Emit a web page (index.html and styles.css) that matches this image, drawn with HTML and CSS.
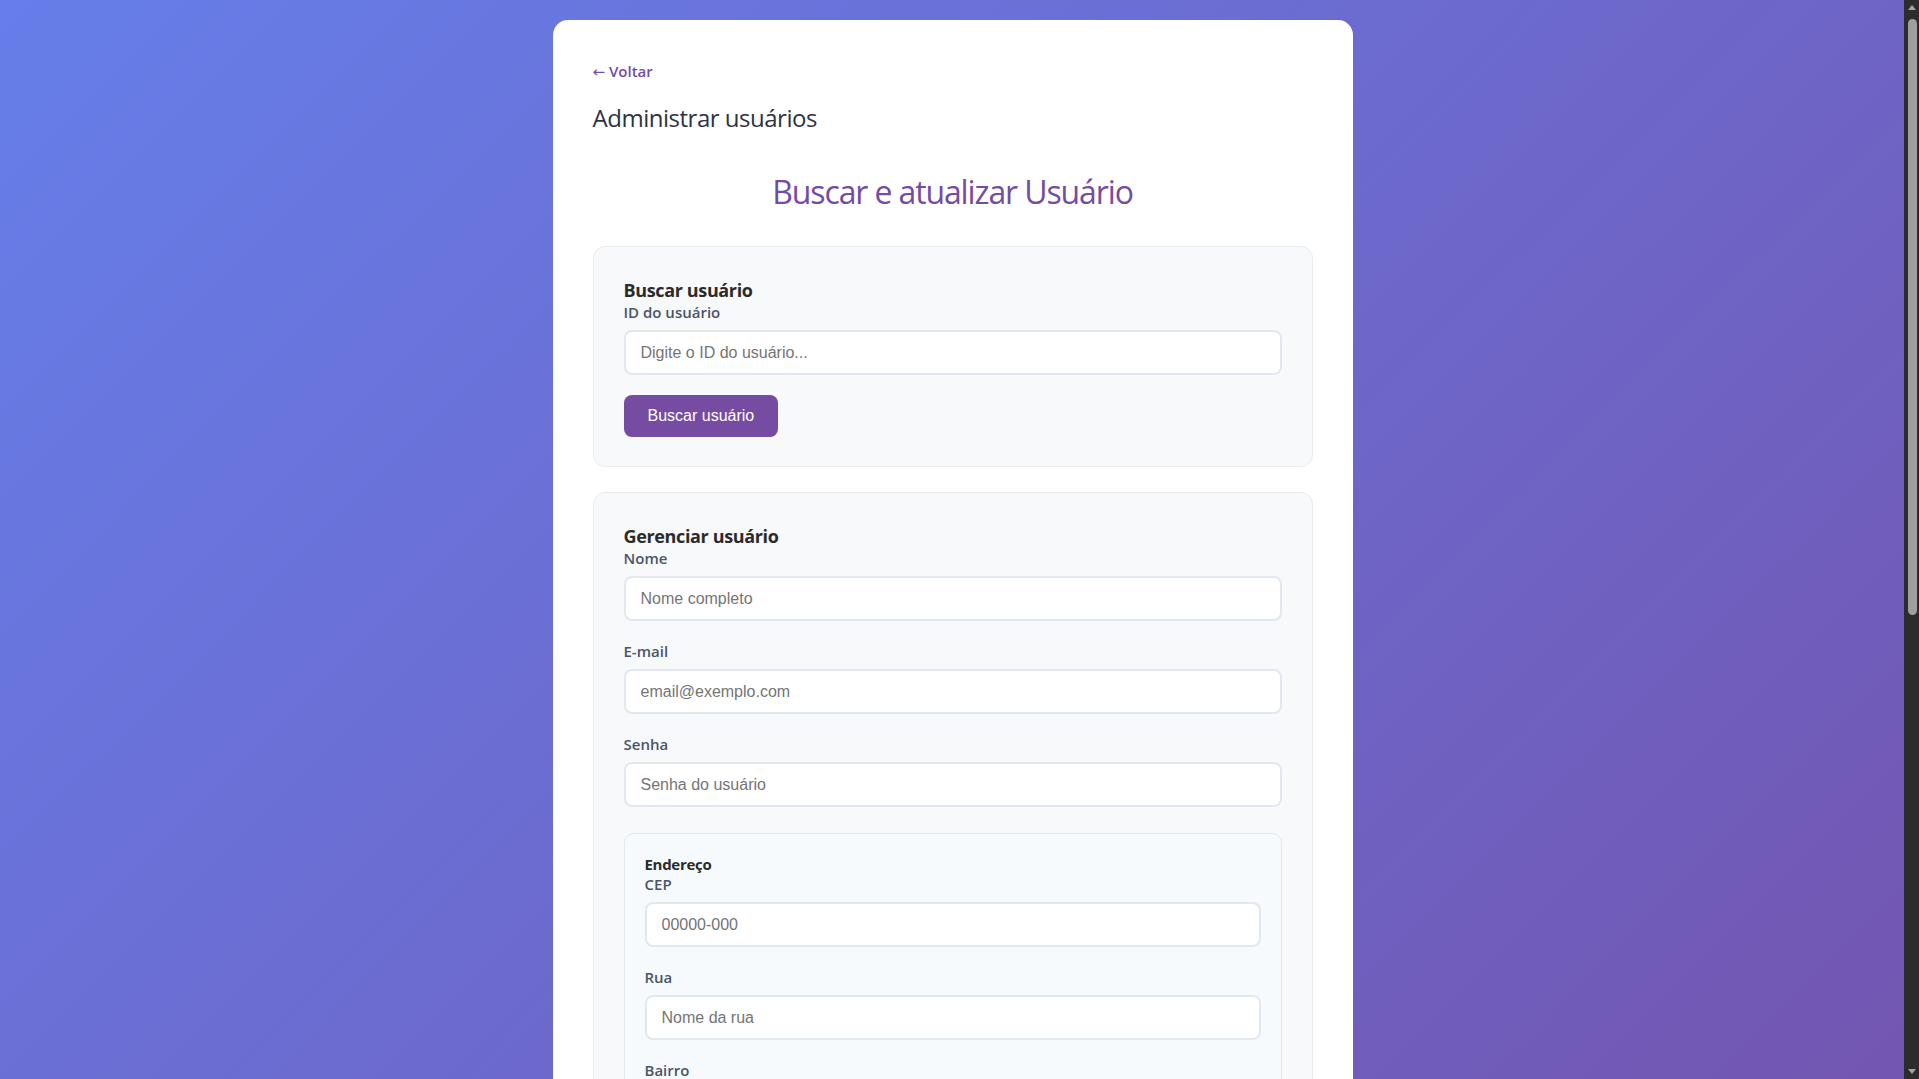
FILE: index.html
```html
<!DOCTYPE html>
<html lang="pt-BR">
<head>
<meta charset="utf-8">
<title>Administrar usuários</title>
<link rel="stylesheet" href="styles.css">
</head>
<body>
<main class="container">
  <div class="back-row"><a class="back" href="#"><span class="back-arrow">←</span> Voltar</a></div>
  <h2 class="page-title">Administrar usuários</h2>
  <h1 class="main-title">Buscar e atualizar Usuário</h1>

  <section class="panel">
    <h3 class="panel-title">Buscar usuário</h3>
    <div class="group">
      <label class="label">ID do usuário</label>
      <input class="input" type="text" placeholder="Digite o ID do usuário...">
    </div>
    <button class="btn">Buscar usuário</button>
  </section>

  <section class="panel">
    <h3 class="panel-title">Gerenciar usuário</h3>
    <div class="group">
      <label class="label">Nome</label>
      <input class="input" type="text" placeholder="Nome completo">
    </div>
    <div class="group">
      <label class="label">E-mail</label>
      <input class="input" type="email" placeholder="email@exemplo.com">
    </div>
    <div class="group">
      <label class="label">Senha</label>
      <input class="input" type="text" placeholder="Senha do usuário">
    </div>

    <div class="address">
      <h4 class="address-title">Endereço</h4>
      <div class="group">
        <label class="label">CEP</label>
        <input class="input" type="text" placeholder="00000-000">
      </div>
      <div class="group">
        <label class="label">Rua</label>
        <input class="input" type="text" placeholder="Nome da rua">
      </div>
      <div class="group">
        <label class="label">Bairro</label>
        <input class="input" type="text" placeholder="Nome do bairro">
      </div>
      <div class="group">
        <label class="label">Cidade</label>
        <input class="input" type="text" placeholder="Nome da cidade">
      </div>
      <div class="group">
        <label class="label">Estado</label>
        <input class="input" type="text" placeholder="UF">
      </div>
      <div class="group">
        <label class="label">Número</label>
        <input class="input" type="text" placeholder="Número">
      </div>
    </div>

    <div class="actions">
      <button class="btn">Atualizar usuário</button>
      <button class="btn btn-danger">Excluir usuário</button>
    </div>
  </section>

  <section class="panel">
    <h3 class="panel-title">Excluir usuário</h3>
    <div class="group">
      <label class="label">ID do usuário</label>
      <input class="input" type="text" placeholder="Digite o ID do usuário...">
    </div>
    <button class="btn btn-danger">Excluir usuário</button>
  </section>
</main>

<div class="fake-scrollbar" aria-hidden="true">
  <span class="sb-arrow sb-up"></span>
  <span class="sb-thumb"></span>
  <span class="sb-arrow sb-down"></span>
</div>
</body>
</html>
```

FILE: styles.css
```css
* {
  box-sizing: border-box;
}

body {
  margin: 0;
  padding: 20px 34px 20px 20px;
  min-height: 100vh;
  background: linear-gradient(135deg, #667eea 0%, #764ba2 100%);
  font-family: "Open Sans", "Noto Sans", sans-serif;
  color: #333;
}

.container {
  max-width: 800px;
  margin: 0 auto;
  background: #ffffff;
  border-radius: 15px;
  padding: 40px;
}

.back-row {
  height: 22px;
  line-height: 22px;
  font-size: 15px;
}

.back {
  color: #764ba2;
  font-weight: 600;
  text-decoration: none;
}

.back-arrow {
  font-family: "DejaVu Sans", sans-serif;
  font-size: 15px;
  font-weight: 400;
  line-height: 1;
}

.page-title {
  margin: 20px 0 0;
  font-size: 24px;
  line-height: 32px;
  font-weight: 400;
  color: #2d3340;
  letter-spacing: -0.02em;
}

.main-title {
  margin: 36px 0 33px;
  font-size: 32px;
  line-height: 43px;
  font-weight: 400;
  color: #764ba2;
  text-align: center;
  letter-spacing: -0.035em;
}

.panel {
  background: #f8f9fa;
  border: 1px solid #e9ecef;
  border-radius: 12px;
  padding: 30px 30px 29px;
  margin-bottom: 25px;
}

.panel-title {
  margin: 0;
  padding-top: 1px;
  font-size: 18px;
  line-height: 24px;
  font-weight: 700;
  color: #2b2b2b;
  letter-spacing: -0.02em;
}

.group {
  margin-bottom: 20px;
}

.label {
  display: block;
  margin-bottom: 7px;
  font-size: 15px;
  line-height: 21px;
  font-weight: 600;
  color: #4a5568;
}

.input {
  display: block;
  width: 100%;
  height: 45px;
  padding: 0 15px;
  border: 2px solid #e2e8f0;
  border-radius: 8px;
  background: #ffffff;
  color: #333;
  font-family: "Liberation Sans", Arial, sans-serif;
  font-size: 16px;
  outline: none;
}

.input::placeholder {
  color: #757575;
}

.btn {
  height: 42px;
  padding: 0 24px;
  border: none;
  border-radius: 8px;
  background: #764ba2;
  color: #ffffff;
  font-family: "Liberation Sans", Arial, sans-serif;
  font-size: 16px;
  cursor: pointer;
}

.btn-danger {
  background: #e53e3e;
}

.address {
  margin: 26px 0 20px;
  background: #f7fafc;
  border: 1px solid #e2e8f0;
  border-radius: 10px;
  padding: 20px;
}

.address-title {
  margin: 0;
  font-size: 15px;
  line-height: 20px;
  font-weight: 700;
  color: #2b2b2b;
  letter-spacing: -0.02em;
}

.actions {
  display: flex;
  gap: 10px;
}

/* drawn scrollbar overlay */
.fake-scrollbar {
  position: fixed;
  top: 0;
  right: 0;
  width: 15px;
  height: 100vh;
  background: #2c2c2c;
}

.sb-thumb {
  position: absolute;
  top: 19px;
  left: 4px;
  width: 9px;
  height: 596px;
  border-radius: 5px;
  background: #9f9f9f;
}

.sb-arrow {
  position: absolute;
  left: 4px;
  width: 0;
  height: 0;
  border-left: 4.5px solid transparent;
  border-right: 4.5px solid transparent;
}

.sb-up {
  top: 5px;
  border-bottom: 5px solid #a3a3a3;
}

.sb-down {
  bottom: 5px;
  border-top: 5px solid #a3a3a3;
}
```
